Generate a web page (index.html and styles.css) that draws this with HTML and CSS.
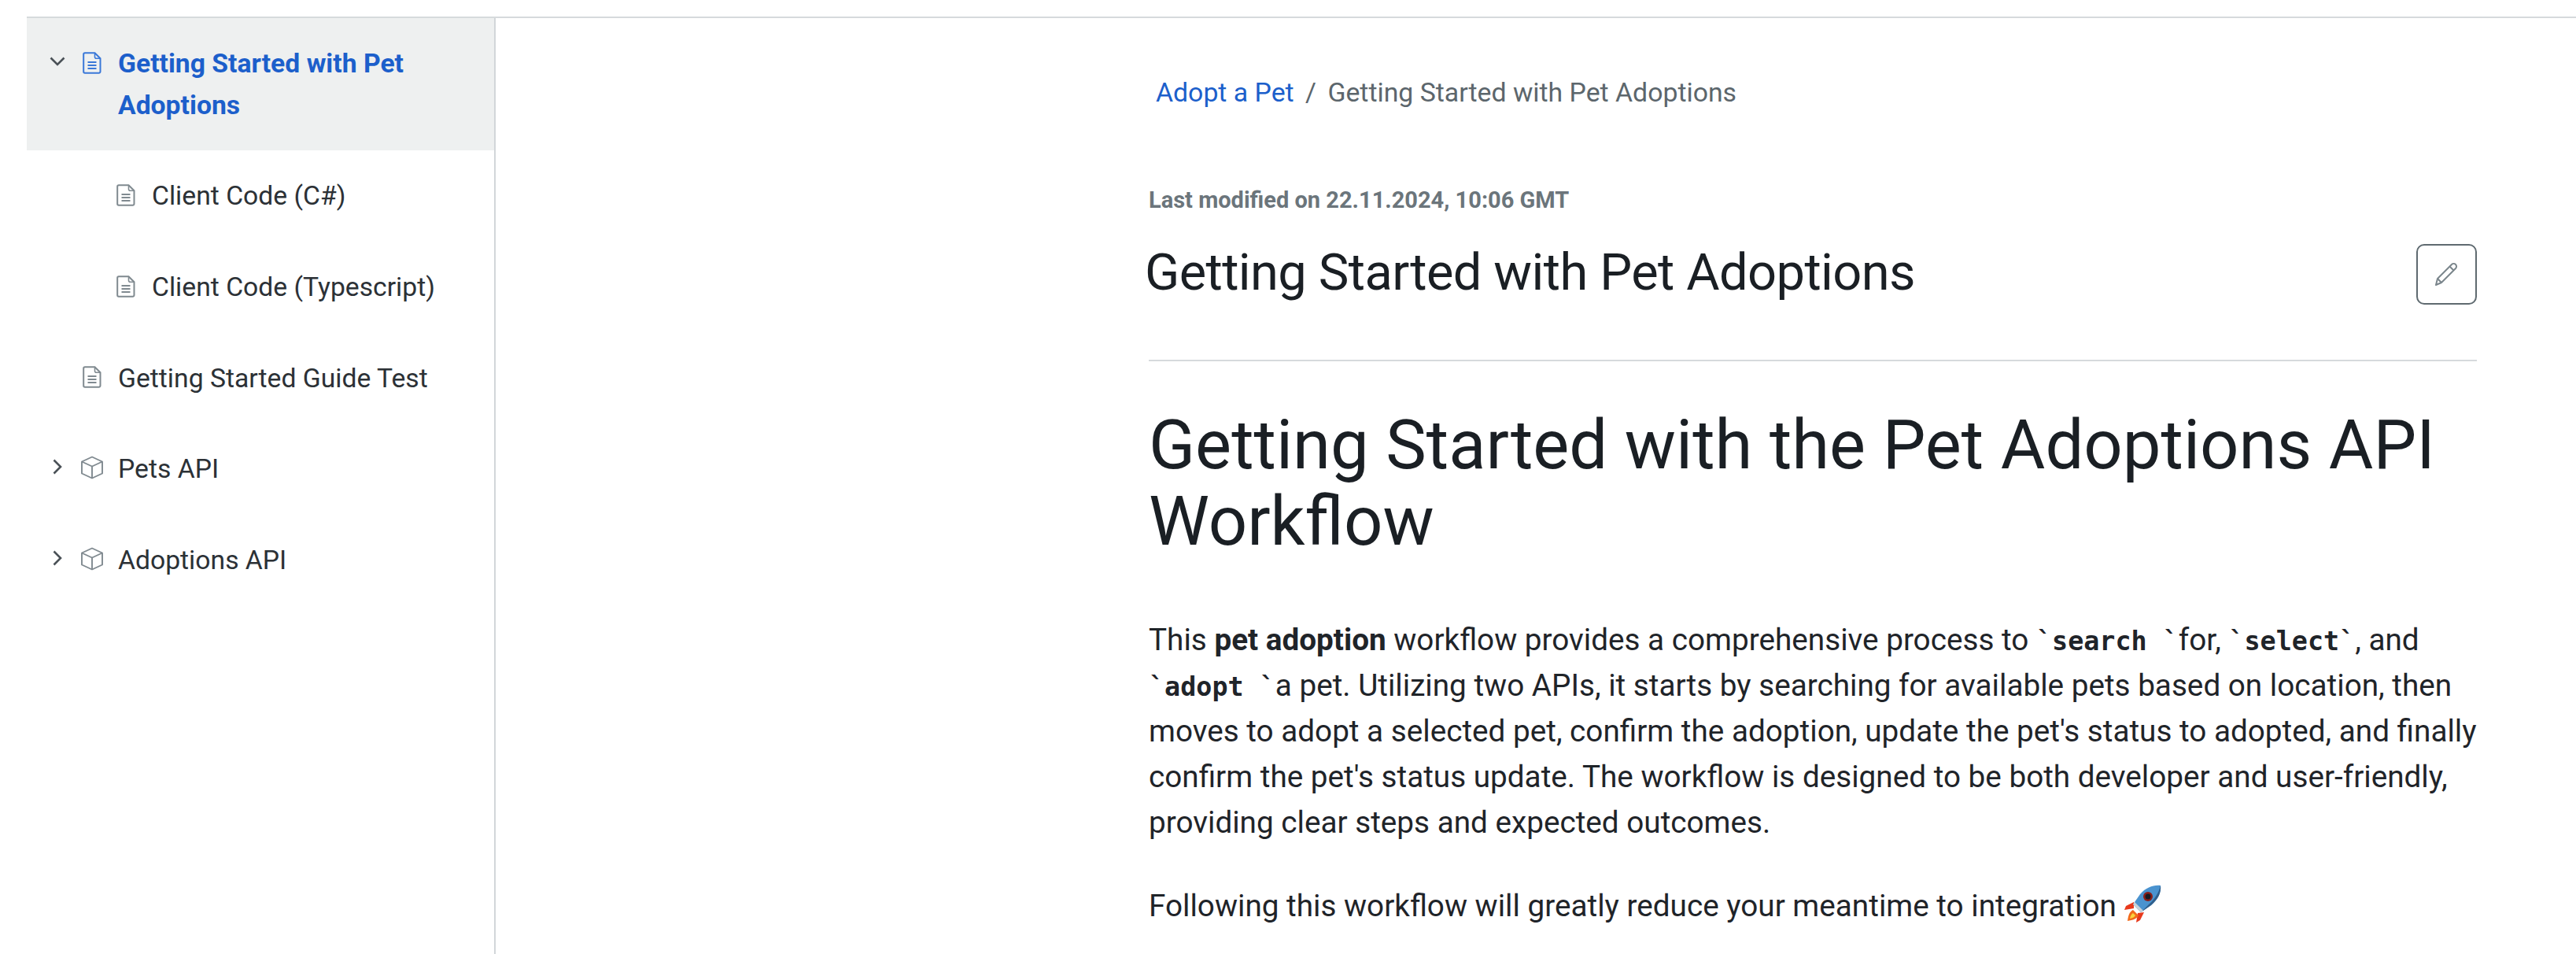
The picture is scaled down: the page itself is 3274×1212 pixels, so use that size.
FILE: index.html
```html
<!DOCTYPE html>
<html lang="en">
<head>
    <meta charset="UTF-8">
    <meta name="viewport" content="width=device-width, initial-scale=1.0">
    <title>Getting Started with Pet Adoptions</title>
    <link rel="stylesheet" href="styles.css">
</head>
<body>
    <svg class="sprites" width="0" height="0">
        <symbol id="doc" viewBox="0 0 24 28">
            <path d="M3 1.2h12.5l7 7V25a1.8 1.8 0 0 1-1.8 1.8H3A1.8 1.8 0 0 1 1.2 25V3A1.8 1.8 0 0 1 3 1.2z" fill="none" stroke="currentColor" stroke-width="2"/>
            <path d="M15.5 1.2v5a2 2 0 0 0 2 2h5" fill="none" stroke="currentColor" stroke-width="1.6"/>
            <path d="M6.5 13h11M6.5 17h11M6.5 21h11" fill="none" stroke="currentColor" stroke-width="2.2"/>
        </symbol>
        <symbol id="cube" viewBox="0 0 30 30">
            <path d="M15 1.5l13 6v15l-13 6-13-6v-15z" fill="none" stroke="currentColor" stroke-width="1.9" stroke-linejoin="round"/>
            <path d="M2 7.5l13 6 13-6M15 13.5v15" fill="none" stroke="currentColor" stroke-width="1.9" stroke-linejoin="round"/>
        </symbol>
    </svg>

    <div class="app">
        <nav class="sidebar">
            <a class="row active">
                <span class="caret">
                    <svg class="chev-down" viewBox="0 0 20 12"><path d="M1.5 1.5L10 10l8.500-8.500"/></svg>
                </span>
                <span class="icon"><svg class="doc"><use href="#doc"/></svg></span>
                <span class="label">Getting Started with Pet Adoptions</span>
            </a>
            <a class="row child">
                <span class="icon"><svg class="doc"><use href="#doc"/></svg></span>
                <span class="label">Client Code (C#)</span>
            </a>
            <a class="row child">
                <span class="icon"><svg class="doc"><use href="#doc"/></svg></span>
                <span class="label">Client Code (Typescript)</span>
            </a>
            <a class="row">
                <span class="caret"></span>
                <span class="icon"><svg class="doc"><use href="#doc"/></svg></span>
                <span class="label">Getting Started Guide Test</span>
            </a>
            <a class="row">
                <span class="caret">
                    <svg class="chev-right" viewBox="0 0 12 20"><path d="M1.500 1.500L10 10l-8.500 8.500"/></svg>
                </span>
                <span class="icon"><svg class="cube"><use href="#cube"/></svg></span>
                <span class="label">Pets API</span>
            </a>
            <a class="row">
                <span class="caret">
                    <svg class="chev-right" viewBox="0 0 12 20"><path d="M1.500 1.500L10 10l-8.500 8.500"/></svg>
                </span>
                <span class="icon"><svg class="cube"><use href="#cube"/></svg></span>
                <span class="label">Adoptions API</span>
            </a>
        </nav>

        <main class="content">
            <div class="breadcrumb">
                <a href="#">Adopt a Pet</a>
                <span class="sep">/</span>
                <span>Getting Started with Pet Adoptions</span>
            </div>

            <p class="modified">Last modified on 22.11.2024, 10:06 GMT</p>

            <header class="page-head">
                <h1>Getting Started with Pet Adoptions</h1>
                <button class="edit" type="button" aria-label="Edit">
                    <svg viewBox="0 0 32 32">
                        <path d="M3 30l2-8L23 4a3.500 3.500 0 0 1 5 5L10 27z" fill="none" stroke="currentColor" stroke-width="2" stroke-linejoin="round"/>
                        <path d="M5 22l5 5M20.500 6.500l5 5" fill="none" stroke="currentColor" stroke-width="2"/>
                    </svg>
                </button>
            </header>

            <h2>Getting Started with the Pet Adoptions API Workflow</h2>

            <p class="first">This <strong>pet adoption</strong> workflow provides a comprehensive process to <code>`search `</code>for, <code>`select`</code>, and <code>`adopt `</code>a pet. Utilizing two APIs, it starts by searching for available pets based on location, then moves to adopt a selected pet, confirm the adoption, update the pet's status to adopted, and finally confirm the pet's status update. The workflow is designed to be both developer and user-friendly, providing clear steps and expected outcomes.</p>

            <p class="next">Following this workflow will greatly reduce your meantime to integration
                <svg class="rocket" viewBox="0 0 48 48" role="img" aria-label="rocket">
                    <path d="M13 22L3 27l-2 5 12-2z" fill="#e8391c"/>
                    <path d="M26 35l-5 10-5 3 2-12z" fill="#e8391c"/>
                    <path d="M12 32c-4 2-6 6-7 14 7-1 12-3 14-7z" fill="#f26a1b"/>
                    <path d="M12 36c-2 1-3 3-4 7 4-1 6-2 7-4z" fill="#fbd23c"/>
                    <path d="M47 1c-9-1-18 2-26 11l-9 13 10 10 13-9C44 18 48 10 47 1z" fill="#4a93cf"/>
                    <path d="M47 1c-2 9-8 18-16 25l-9 9 13-9C44 18 48 10 47 1z" fill="#2f5f8c"/>
                    <path d="M12 25l10 10 3-2-11-11z" fill="#c9d2d8"/>
                    <circle cx="31" cy="15" r="6" fill="#8a1f1a"/>
                    <circle cx="31" cy="15" r="3.500" fill="#1a1a22"/>
                </svg>
            </p>
        </main>
    </div>
</body>
</html>
```

FILE: styles.css
```css
html, body {
    margin: 0;
    height: 1212px;
    overflow: hidden;
    background-color: #fff;
}
body {
    font-family: Roboto, "Liberation Sans", sans-serif;
    color: #1f2429;
    padding-top: 21px;
    box-sizing: border-box;
}
.sprites {
    display: block;
    height: 0;
}
.app {
    display: flex;
    margin-left: 34px;
    height: 1191px;
    border-top: 2px solid #d6dadc;
}

/* sidebar */
.sidebar {
    width: 594px;
    flex: none;
    border-right: 2px solid #d2d6d9;
}
.row {
    display: flex;
    align-items: flex-start;
    padding: 31.35px 20px 31.35px 26px;
    font-size: 33.7px;
    line-height: 53px;
    color: #2c3136;
}
.row.active {
    padding-top: 31px;
    padding-bottom: 31px;
    background-color: #eef0f0;
    color: #1c5fcb;
    font-weight: 700;
}
.row.child {
    padding-left: 114px;
}
.caret {
    width: 45px;
    height: 53px;
    flex: none;
    display: flex;
    align-items: center;
    color: #4a5157;
}
.chev-down {
    width: 20px;
    height: 12px;
    margin: -6px 0 0 3px;
}
.chev-right {
    width: 12px;
    height: 20px;
    margin: -6px 0 0 7px;
}
.caret path {
    fill: none;
    stroke: currentColor;
    stroke-width: 2.6;
}
.icon {
    width: 45px;
    height: 53px;
    flex: none;
    display: flex;
    align-items: center;
    color: #808a90;
}
.active .icon {
    color: #3a78d8;
}
.doc {
    width: 24px;
    height: 28px;
    margin-top: -2px;
}
.cube {
    width: 30px;
    height: 30px;
    margin: -3px 0 0 -3px;
}

/* main column */
.content {
    flex: 1;
    padding: 0 126px 0 830px;
    min-width: 0;
    font-size: 38.7px;
    line-height: 58px;
}
.breadcrumb {
    margin-top: 66px;
    padding-left: 9px;
    font-size: 33.8px;
    line-height: 58px;
    color: #5c666c;
}
.breadcrumb a {
    color: #1c5fcb;
    text-decoration: none;
}
.sep {
    margin: 0 6px;
}
.modified {
    margin: 0;
    padding-top: 87px;
    font-size: 29px;
    line-height: 40px;
    font-weight: 700;
    color: #6b757b;
}
.page-head {
    display: flex;
    align-items: center;
    justify-content: space-between;
    padding: 32px 0 67px;
    border-bottom: 2px solid #d6dadc;
}
h1 {
    margin: 0 0 4px -5px;
    font-size: 65px;
    line-height: 80px;
    font-weight: 400;
    letter-spacing: -0.6px;
    color: #1a1f24;
}
.edit {
    width: 77px;
    height: 77px;
    flex: none;
    padding: 20px;
    background: #fff;
    border: 2.500px solid #5f6a70;
    border-radius: 10px;
    color: #7b868c;
}
.edit svg {
    display: block;
    width: 32px;
    height: 32px;
}
h2 {
    margin: 58px 0 0;
    font-size: 86.800px;
    line-height: 97px;
    font-weight: 400;
    color: #1a1f24;
}
.first {
    margin: 73px 0 0;
}
.next {
    margin: 48px 0 0;
}
code {
    font-family: "DejaVu Sans Mono", "Liberation Mono", monospace;
    font-weight: 700;
    font-size: 33.4px;
    line-height: 1;
}
.rocket {
    width: 48px;
    height: 48px;
    vertical-align: -8px;
}
```
